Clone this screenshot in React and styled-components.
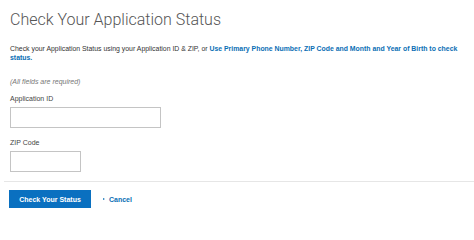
import React from 'react';
import styled, { createGlobalStyle } from 'styled-components';

const GlobalStyle = createGlobalStyle`
    html, body {
        margin: 0;
        padding: 0;
        background: #ffffff;
    }
    body {
        font-family: 'Liberation Sans', Arial, sans-serif;
        color: #333333;
    }
`

const Page = styled.div`
    width: 474px;
    height: 227px;
    overflow: hidden;
    display: flex;
    flex-direction: column;
`

const Content = styled.div`
    padding: 9px 10px 0 10px;
    display: flex;
    flex-direction: column;
`

const Title = styled.h1`
    margin: 0;
    font-family: Roboto, 'Liberation Sans', sans-serif;
    font-weight: 300;
    font-size: 16px;
    line-height: 22px;
    color: #555555;
`

const Intro = styled.p`
    margin: 13px 0 0 0;
    font-size: 6.9px;
    line-height: 9px;
    color: #333333;
`

const IntroLink = styled.a`
    color: #0a6eb4;
    font-weight: bold;
    text-decoration: none;
`

const Note = styled.p`
    margin: 15px 0 0 0;
    font-size: 7px;
    line-height: 9px;
    font-style: italic;
    color: #777777;
`

const Field = styled.div`
    display: flex;
    flex-direction: column;
    margin-top: ${({first}) => (first ? '8px' : '10px')};
`

const Label = styled.label`
    font-size: 7px;
    line-height: 9px;
    color: #444444;
`

const Input = styled.input`
    box-sizing: border-box;
    margin-top: 4px;
    width: ${({wide}) => (wide ? '151px' : '71px')};
    height: 21px;
    border: 1px solid #c4c4c4;
    border-radius: 0;
    background: #ffffff;
    padding: 0 4px;
    outline: none;
`

const Divider = styled.hr`
    margin: 9px 0 0 4px;
    border: none;
    border-top: 1px solid #e6e6e6;
    height: 0;
`

const Actions = styled.div`
    display: flex;
    align-items: center;
    gap: 12px;
    padding: 8px 0 0 9px;
`

const PrimaryButton = styled.button`
    width: 82px;
    height: 18px;
    border: none;
    border-radius: 0;
    background: #0a70c0;
    color: #ffffff;
    font-family: 'Liberation Sans', Arial, sans-serif;
    font-weight: bold;
    font-size: 7px;
    padding: 0;
    cursor: pointer;
`

const CancelLink = styled.a`
    display: flex;
    align-items: center;
    gap: 4px;
    color: #0a6eb4;
    font-weight: bold;
    font-size: 7px;
    text-decoration: none;
    cursor: pointer;
`

const Caret = styled.span`
    width: 0;
    height: 0;
    border-top: 1.5px solid transparent;
    border-bottom: 1.5px solid transparent;
    border-left: 2px solid #0a6eb4;
`

const App = () => {
    return (
        <Page>
            <GlobalStyle />
            <Content>
                <Title>Check Your Application Status</Title>
                <Intro>
                    Check your Application Status using your Application ID &amp; ZIP, or{' '}
                    <IntroLink href="#">Use Primary Phone Number, ZIP Code and Month and Year of Birth to check status.</IntroLink>
                </Intro>
                <Note>(All fields are required)</Note>
                <Field first>
                    <Label>Application ID</Label>
                    <Input wide />
                </Field>
                <Field>
                    <Label>ZIP Code</Label>
                    <Input />
                </Field>
            </Content>
            <Divider />
            <Actions>
                <PrimaryButton>Check Your Status</PrimaryButton>
                <CancelLink href="#"><Caret />Cancel</CancelLink>
            </Actions>
        </Page>
    );
};

export default App;
